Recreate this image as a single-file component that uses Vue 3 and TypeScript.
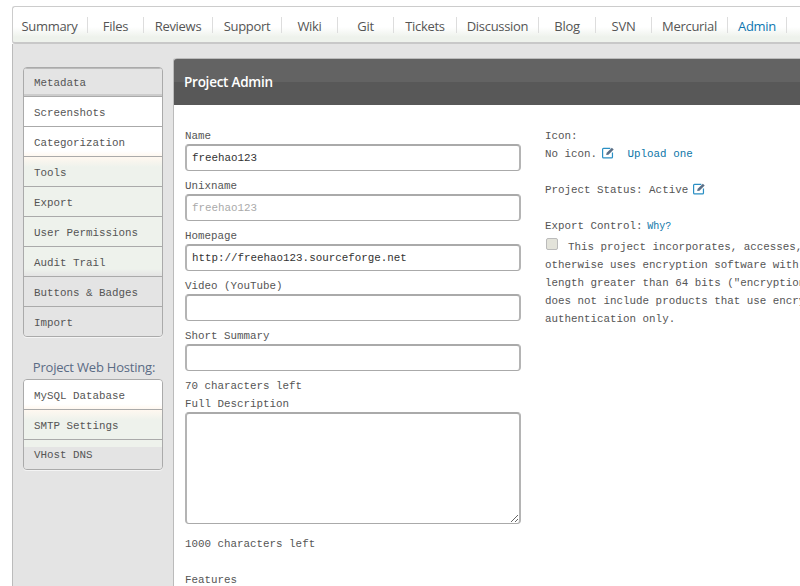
<script setup lang="ts">
interface Tab { label: string; width: number; active?: boolean }
const tabs: Tab[] = [
  { label: 'Summary', width: 76 }, { label: 'Files', width: 56 }, { label: 'Reviews', width: 69 },
  { label: 'Support', width: 69 }, { label: 'Wiki', width: 56 }, { label: 'Git', width: 56 },
  { label: 'Tickets', width: 63 }, { label: 'Discussion', width: 82 }, { label: 'Blog', width: 57 },
  { label: 'SVN', width: 56 }, { label: 'Mercurial', width: 76 }, { label: 'Admin', width: 59, active: true }
]
const adminNav = [
  { label: 'Metadata', tone: 'active' }, { label: 'Screenshots', tone: 'white' }, { label: 'Categorization', tone: 'white-fade' },
  { label: 'Tools', tone: 'green-top' }, { label: 'Export', tone: 'green' }, { label: 'User Permissions', tone: 'green' },
  { label: 'Audit Trail', tone: 'green-bottom' }, { label: 'Buttons & Badges', tone: 'grey' }, { label: 'Import', tone: 'grey' }
]
const hostNav = [
  { label: 'MySQL Database', tone: 'white-fade' }, { label: 'SMTP Settings', tone: 'green-top' }, { label: 'VHost DNS', tone: 'grey-split' }
]
</script>

<template>
  <div class="page">
    <nav class="tabs">
      <a v-for="t in tabs" :key="t.label" class="tab" :class="{ current: t.active }" :style="{ width: t.width + 'px' }">{{ t.label }}</a>
    </nav>
    <div class="shell">
      <aside class="side">
        <ul class="menu">
          <li v-for="n in adminNav" :key="n.label" :class="n.tone">{{ n.label }}</li>
        </ul>
        <h3 class="side-title">Project Web Hosting:</h3>
        <ul class="menu">
          <li v-for="n in hostNav" :key="n.label" :class="n.tone">{{ n.label }}</li>
        </ul>
      </aside>
      <main class="panel">
        <header class="panel-head">Project Admin</header>
        <div class="panel-body">
          <form class="left">
            <label>Name</label>
            <input class="field" value="freehao123" />
            <label>Unixname</label>
            <input class="field" value="freehao123" disabled />
            <label>Homepage</label>
            <input class="field" value="http://freehao123.sourceforge.net" />
            <label>Video (YouTube)</label>
            <input class="field" />
            <label>Short Summary</label>
            <input class="field" />
            <div class="count">70 characters left</div>
            <label class="desc">Full Description</label>
            <textarea class="area"></textarea>
            <div class="count big">1000 characters left</div>
            <label class="features">Features</label>
          </form>
          <section class="right">
            <div>Icon:</div>
            <div class="icon-row">No icon.
              <svg class="edit" viewBox="0 0 14 14" width="14" height="13">
                <path d="M9.5 2.5H2.2a1 1 0 0 0-1 1v8.3a1 1 0 0 0 1 1h8.6a1 1 0 0 0 1-1V7" fill="#fff" stroke="#2a8fc4" stroke-width="1.3" />
                <path d="M5 9.8l.6-2.4L11.2 1.8l1.9 1.9-5.6 5.6z" fill="#5b6f86" />
              </svg>
              <a class="link upload">Upload one</a>
            </div>
            <div class="gap">Project Status: Active
              <svg class="edit" viewBox="0 0 14 14" width="14" height="13">
                <path d="M9.5 2.5H2.2a1 1 0 0 0-1 1v8.3a1 1 0 0 0 1 1h8.6a1 1 0 0 0 1-1V7" fill="#fff" stroke="#2a8fc4" stroke-width="1.3" />
                <path d="M5 9.8l.6-2.4L11.2 1.8l1.9 1.9-5.6 5.6z" fill="#5b6f86" />
              </svg>
            </div>
            <div class="gap">Export Control: <a class="link why">Why?</a></div>
            <div class="export"><span class="check"></span>This project incorporates, accesses, calls upon, or<br />otherwise uses encryption software with a key<br />length greater than 64 bits ("encryption software"), or<br />does not include products that use encryption for<br />authentication only.</div>
          </section>
        </div>
      </main>
    </div>
  </div>
</template>

<style>
html, body { margin: 0; overflow: hidden; background: #fff; }
</style>

<style scoped>
.page {
  width: 800px;
  height: 586px;
  overflow: hidden;
  padding: 6px 0 0 12px;
  box-sizing: border-box;
  font: 10.85px/18px "Liberation Mono", monospace;
  color: #555;
}
.tabs {
  display: flex;
  height: 38px;
  width: 900px;
  box-sizing: border-box;
  padding-top: 10px;
  border-top: 1px solid #ccc;
  border-left: 1px solid #ccc;
  border-bottom: 2px solid #c8c8c8;
  border-top-left-radius: 3px;
  border-bottom-left-radius: 3px;
  background: linear-gradient(#fff 0, #fff 20px, #eef2ec 30px);
}
.tab {
  box-sizing: border-box;
  height: 16px;
  border-right: 1px solid #ddd;
  font: 13px/18px "Open Sans", sans-serif;
  letter-spacing: -0.3px;
  text-align: center;
  color: #555;
}
.tab:first-child { margin-left: -1px; }
.tab.current { color: #0e76b0; }
.shell {
  display: flex;
  align-items: stretch;
  width: 900px;
  height: 560px;
  background: #e4e4e4;
  border-left: 1px solid #bbb;
  box-sizing: border-box;
}
.side {
  width: 160px;
  flex: none;
  padding: 23px 0 0 10px;
  box-sizing: border-box;
}
.menu {
  list-style: none;
  margin: 0;
  padding: 0;
  width: 140px;
  box-sizing: border-box;
  border: 1px solid #aaa;
  border-radius: 4px;
  overflow: hidden;
  box-shadow: 0 1px 0 #f4f4f4;
}
.menu li {
  height: 30px;
  box-sizing: border-box;
  padding: 7px 0 0 10px;
  border-bottom: 1px solid #aaa;
  color: #555;
  background: #e4e4e4;
}
.menu li:last-child { border-bottom: 0; height: 29px; }
.menu li.active { box-shadow: inset 0 1px 0 #bbb, inset 0 -2px 0 #ccc; padding-top: 6px; height: 29px; background: #e4e4e4; }
.menu li.white { background: #fff; }
.menu li.white-fade { background: linear-gradient(#fff 0, #fff 24px, #fff8f0 29px); }
.menu li.green-top { background: linear-gradient(#fff8f0 0, #eef2ec 10px); }
.menu li.green { background: #eef2ec; }
.menu li.green-bottom { background: linear-gradient(#eef2ec 22px, #e4e4e4 29px); }
.menu li.grey-split { background: linear-gradient(#eef2ec 7px, #e4e4e4 7px); padding-top: 6px; }
.side-title {
  margin: 19px 0 1px;
  height: 22px;
  font: 400 13px/22px "Open Sans", sans-serif;
  letter-spacing: -0.2px;
  color: #5a6b84;
  text-align: center;
  width: 142px;
}
.panel {
  flex: none;
  width: 727px;
  margin-top: 14px;
  background: #fff;
  border-left: 1px solid #bbb;
  border-top-left-radius: 3px;
  box-sizing: border-box;
}
.panel-head {
  height: 47px;
  box-sizing: border-box;
  padding-left: 10px;
  font: 600 13.5px/47px "Open Sans", sans-serif;
  letter-spacing: -0.25px;
  color: #fff;
  border-top-left-radius: 3px;
  border-top: 1px solid #bbb;
  background: linear-gradient(#636363 0, #636363 23px, #585858 23px);
}
.panel-body {
  display: flex;
  padding: 21px 0 0 11px;
}
.left {
  width: 360px;
  flex: none;
  display: flex;
  flex-direction: column;
  align-items: flex-start;
}
.left label { display: block; height: 18px; line-height: 20px; }
.field, .area {
  display: block;
  margin: 0 0 5px 0;
  padding: 0 5px;
  box-sizing: border-box;
  width: 336px;
  height: 27px;
  border: 1px solid #aaa;
  border-top: 2px solid #aaa;
  border-left: 2px solid #b4b4b4;
  border-right: 2px solid #b4b4b4;
  border-radius: 4px;
  background: #fff;
  outline: none;
  font: 10.85px "Liberation Mono", monospace;
  color: #333;
}
.field:disabled { color: #aaa; background: #fff; }
.area { height: 112px; margin-bottom: 0; resize: both; }
.count { height: 18px; margin-top: 1px; margin-bottom: 0; }
.left label.desc { height: 17px; line-height: 18px; }
.big { margin-top: 11px; }
.left label.features { margin-top: 18px; line-height: 18px; }
.right {
  white-space: nowrap;
  margin-top: 1px;
}
.edit { vertical-align: -2px; margin-left: -3px; }
.link { color: #0e76a8; }
.upload { margin-left: 13px; }
.why { font-size: 10px; margin-left: -2px; }
.gap { margin-top: 18px; }
.export { margin-top: 2px; }
.check {
  display: inline-block;
  width: 12px;
  height: 12px;
  box-sizing: border-box;
  margin: 0 10px 0 1px;
  vertical-align: 0;
  background: #e3e3da;
  border: 1px solid #bbb;
  border-radius: 2px;
}
</style>
